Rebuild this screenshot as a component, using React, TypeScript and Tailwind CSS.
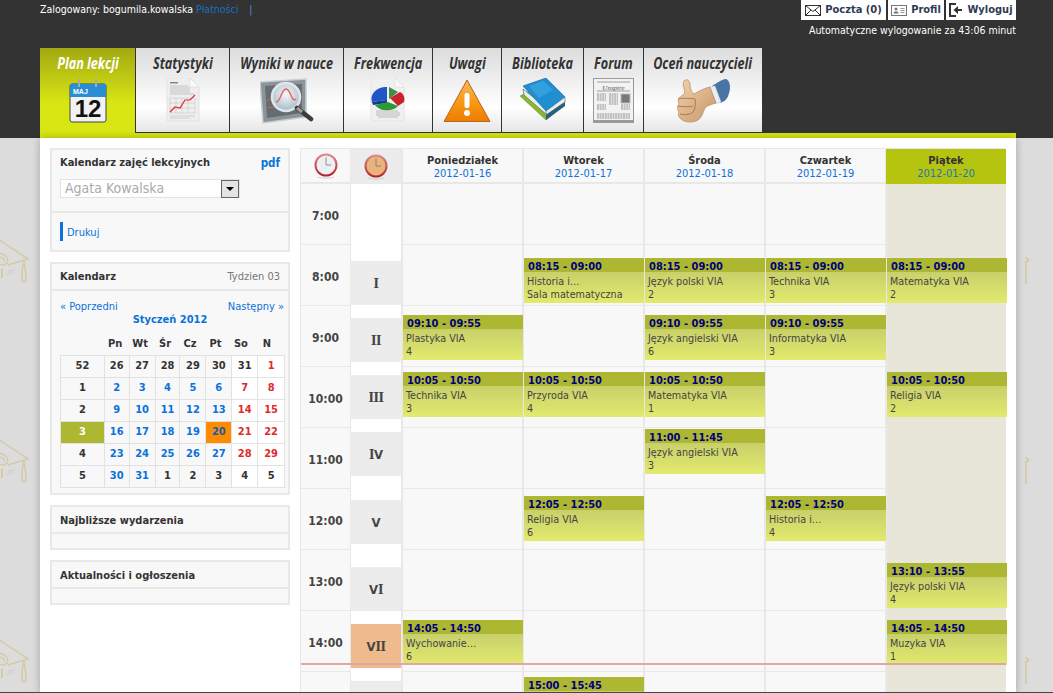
const tabs = [
  { label: 'Statystyki', w: 'w-[94px]', icon: <ReportIcon /> },
  { label: 'Wyniki w nauce', w: 'w-[114px]', icon: <ScopeIcon /> },
  { label: 'Frekwencja', w: 'w-[89px]', icon: <PieIcon /> },
  { label: 'Uwagi', w: 'w-[69px]', icon: <WarningIcon /> },
  { label: 'Biblioteka', w: 'w-[82px]', icon: <BooksIcon /> },
  { label: 'Forum', w: 'w-[60px]', icon: <NewsIcon /> },
  { label: 'Oceń nauczycieli', w: 'w-[119px]', icon: <ThumbIcon /> },
]

// last row is cut off by the window, only its frame shows
const hours = ['7:00', '8:00', '9:00', '10:00', '11:00', '12:00', '13:00', '14:00', '']

const periods = [
  { n: 'I', top: 77 },
  { n: 'II', top: 134 },
  { n: 'III', top: 191 },
  { n: 'IV', top: 248 },
  { n: 'V', top: 316 },
  { n: 'VI', top: 383 },
  { n: 'VII', top: 440, now: true },
  { n: '', top: 497 },
]

const T = { a: 74, b: 131, c: 188, d: 245, e: 312, f: 379, g: 436, h: 493 }

const days = [
  {
    name: 'Poniedziałek',
    date: '2012-01-16',
    lessons: [
      { top: T.b, time: '09:10 - 09:55', title: 'Plastyka VIA', room: '4' },
      { top: T.c, time: '10:05 - 10:50', title: 'Technika VIA', room: '3' },
      { top: T.g, time: '14:05 - 14:50', title: 'Wychowanie…', room: '6' },
    ],
  },
  {
    name: 'Wtorek',
    date: '2012-01-17',
    lessons: [
      { top: T.a, time: '08:15 - 09:00', title: 'Historia i…', room: 'Sala matematyczna' },
      { top: T.c, time: '10:05 - 10:50', title: 'Przyroda VIA', room: '4' },
      { top: T.e, time: '12:05 - 12:50', title: 'Religia VIA', room: '6' },
      { top: T.h, time: '15:00 - 15:45', title: '', room: '' },
    ],
  },
  {
    name: 'Środa',
    date: '2012-01-18',
    lessons: [
      { top: T.a, time: '08:15 - 09:00', title: 'Język polski VIA', room: '2' },
      { top: T.b, time: '09:10 - 09:55', title: 'Język angielski VIA', room: '6' },
      { top: T.c, time: '10:05 - 10:50', title: 'Matematyka VIA', room: '1' },
      { top: T.d, time: '11:00 - 11:45', title: 'Język angielski VIA', room: '3' },
    ],
  },
  {
    name: 'Czwartek',
    date: '2012-01-19',
    lessons: [
      { top: T.a, time: '08:15 - 09:00', title: 'Technika VIA', room: '3' },
      { top: T.b, time: '09:10 - 09:55', title: 'Informatyka VIA', room: '3' },
      { top: T.e, time: '12:05 - 12:50', title: 'Historia i…', room: '4' },
    ],
  },
  {
    name: 'Piątek',
    date: '2012-01-20',
    today: true,
    lessons: [
      { top: T.a, time: '08:15 - 09:00', title: 'Matematyka VIA', room: '2' },
      { top: T.c, time: '10:05 - 10:50', title: 'Religia VIA', room: '2' },
      { top: T.f, time: '13:10 - 13:55', title: 'Język polski VIA', room: '4' },
      { top: T.g, time: '14:05 - 14:50', title: 'Muzyka VIA', room: '1' },
    ],
  },
]

const weeks = [
  ['52', '26', '27', '28', '29', '30', '31', '1'],
  ['1', '2', '3', '4', '5', '6', '7', '8'],
  ['2', '9', '10', '11', '12', '13', '14', '15'],
  ['3', '16', '17', '18', '19', '20', '21', '22'],
  ['4', '23', '24', '25', '26', '27', '28', '29'],
  ['5', '30', '31', '1', '2', '3', '4', '5'],
]

function ReportIcon() {
  return (
    <svg width="36" height="46" viewBox="0 0 36 46">
      <path d="M2 0h23l9 9v34H2z" fill="#eeeeee" stroke="#e2e2e2" />
      <path d="M25 0l9 9h-9z" fill="#fafafa" stroke="#d0d0d0" strokeWidth=".5" />
      <rect x="5" y="4" width="8" height="1.5" fill="#888" />
      <path d="M5 8h18M5 10h20M5 12h20M5 14h20M5 16h24" stroke="#c4c4c4" strokeWidth="1" />
      <path d="M5 20h25M5 25h25M5 30h25M5 35h25M5 20v15M11 20v15M17 20v15M23 20v15M30 20v15" stroke="#c8c8c8" strokeWidth=".6" fill="none" />
      <path d="M5 34l5-5 5 1 5-8 5 0 5-5" stroke="#e5282a" strokeWidth="1.2" fill="none" />
      <path d="M5 38h25M5 40h20" stroke="#cfcfcf" strokeWidth="1" />
    </svg>
  )
}

function ScopeIcon() {
  return (
    <svg width="54" height="46" viewBox="0 0 54 46">
      <defs>
        <radialGradient id="lens" cx=".5" cy=".4" r=".6">
          <stop offset="0" stopColor="#f4f7f9" />
          <stop offset="1" stopColor="#a9bcc7" />
        </radialGradient>
      </defs>
      <path d="M0 4l46-3v38L3 45z" fill="#8d9499" stroke="#c5d0d6" strokeWidth="1.5" />
      <path d="M5 8l37-2v29L7 40z" fill="#666c70" />
      <path d="M6 23l12-5M34 20l8-2M7 30l35-5" stroke="#d86a6a" strokeWidth=".7" />
      <circle cx="26" cy="19" r="14" fill="url(#lens)" stroke="#dfe7ec" strokeWidth="2.5" />
      <path d="M16 24c5 0 5-13 10-13s5 14 10 10" stroke="#e06060" strokeWidth="1.3" fill="none" />
      <path d="M37 30l14 11" stroke="#3c3c3c" strokeWidth="4.5" strokeLinecap="round" />
      <path d="M37 30l5 4" stroke="#a0a0a0" strokeWidth="3" />
    </svg>
  )
}

function PieIcon() {
  return (
    <svg width="36" height="46" viewBox="0 0 36 46">
      <path d="M1 0h24l9 9v34H1z" fill="#f0f0f0" stroke="#e4e4e4" />
      <path d="M25 0l9 9h-9z" fill="#fbfbfb" stroke="#d4d4d4" strokeWidth=".5" />
      <path d="M17 9v13L2 24c-3-8 6-16 15-15z" fill="#1f55c8" />
      <path d="M2 24l15-2v3L3 27z" fill="#123a8e" />
      <path d="M19 9l9 5-9 7z" fill="#3f8f46" />
      <path d="M20 20l10-6c4 2 5 6 4 10l-6 4z" fill="#c9232b" />
      <path d="M5 27l13-3 10 4c-5 6-18 6-23-1z" fill="#2d9a38" />
      <path d="M6 33h22M6 35h24M6 37h24M8 39h20" stroke="#bcbcbc" strokeWidth="1" />
    </svg>
  )
}

function WarningIcon() {
  return (
    <svg width="48" height="44" viewBox="0 0 48 44">
      <defs>
        <linearGradient id="warn" x1="0" y1="0" x2="0" y2="1">
          <stop offset="0" stopColor="#f9b85a" />
          <stop offset=".6" stopColor="#f69510" />
          <stop offset="1" stopColor="#f07c00" />
        </linearGradient>
      </defs>
      <path d="M24 1l23 41.500H1z" fill="url(#warn)" stroke="#b5651d" strokeWidth="1" strokeLinejoin="round" />
      <rect x="21.500" y="14" width="5" height="15" rx="2" fill="#fff" />
      <circle cx="24" cy="34" r="3" fill="#fff" />
    </svg>
  )
}

function BooksIcon() {
  return (
    <svg width="48" height="46" viewBox="0 0 48 46">
      <path d="M1 18l26 24 18-15-26-19z" fill="#8db52c" stroke="#6e8e20" strokeWidth=".5" />
      <path d="M4 11l24 19v7L5 17z" fill="#e8eef0" stroke="#55707c" strokeWidth=".7" />
      <path d="M4 8L27 0l19 19-19 14z" fill="#1f8fd2" stroke="#1a6ea4" strokeWidth=".7" />
      <path d="M10 8l14-5 10 9-14 8z" fill="#3aa6e2" opacity=".7" />
      <path d="M27 33l19-14v5L27 37z" fill="#e8eef0" stroke="#55707c" strokeWidth=".7" />
      <path d="M27 37l19-13v4L27 42z" fill="#285f80" />
    </svg>
  )
}

function NewsIcon() {
  return (
    <svg width="41" height="46" viewBox="0 0 41 46">
      <rect x=".5" y=".5" width="40" height="44" fill="#f2f2f2" stroke="#9a9a9a" />
      <rect x=".5" y="42" width="40" height="3" fill="#9a9a9a" />
      <path d="M4 4h33M4 13h33" stroke="#8a8a8a" strokeWidth=".8" />
      <text x="20.500" y="11.500" textAnchor="middle" fontSize="7" fontStyle="italic" fontFamily="Liberation Serif, serif" fill="#555">Unspire</text>
      <path d="M4 16h9M4 18h9M4 20h9M4 22h9M4 27h9M4 29h9M4 31h9M16 16h9M16 18h9M16 20h9M16 22h9M16 24h9M16 26h9M28 27h9M28 29h9M28 31h9M4 36h33M4 38h33M4 40h33" stroke="#8f8f8f" strokeWidth="1" strokeDasharray="2 .6" />
      <rect x="28" y="16" width="9" height="9" fill="#777" stroke="#bbb" />
    </svg>
  )
}

function ThumbIcon() {
  return (
    <svg width="56" height="46" viewBox="0 0 56 46">
      <defs>
        <linearGradient id="skin" x1="0" y1="0" x2="1" y2="1">
          <stop offset="0" stopColor="#f3d3ac" />
          <stop offset="1" stopColor="#c79468" />
        </linearGradient>
      </defs>
      <path d="M37 8c5-3 10-7 14-7 4 1 5 9 3 14-1 6-5 9-9 10z" fill="#4a74a3" />
      <path d="M34 9l6-1 6 16-5 2z" fill="#e8eef4" stroke="#c4ccd4" strokeWidth=".5" />
      <path d="M9 3c3-3 6 0 6 3 0 4 1 8 4 10 5-3 11-6 16-7l6 16c-3 1-8 2-11 5-2 4-3 11-9 13-6 2-12 1-15-2-3-2-3-5-2-7-2-3-2-6 0-8-2-4 0-7 4-9 2-1 2-4 1-7-1-3-1-5 0-7z" fill="url(#skin)" stroke="#a97a50" strokeWidth=".6" />
      <path d="M3 21c4-1 12-1 17 0M3 28c5 1 12 1 15 0M5 36c4 1 9 1 12-1M20 21c1 4 0 12-3 14" stroke="#9c6c44" strokeWidth=".8" fill="none" />
    </svg>
  )
}

function ClockIcon({ face }: { face: string }) {
  return (
    <svg width="26" height="26" viewBox="0 0 26 26">
      <defs>
        <linearGradient id="ring" x1="0" y1="0" x2="0" y2="1">
          <stop offset="0" stopColor="#d98a8a" />
          <stop offset="1" stopColor="#b5252a" />
        </linearGradient>
      </defs>
      <circle cx="13" cy="12" r="10.500" fill={face} stroke="url(#ring)" strokeWidth="2" />
      <path d="M13 12V4.500M13 12h5" stroke="#777" strokeWidth=".8" />
      <path d="M5 24c3 1.500 13 1.500 16 0" stroke="#ccc" strokeWidth="1" fill="none" />
    </svg>
  )
}

function Mail() {
  return (
    <svg width="16" height="11" viewBox="0 0 16 11" fill="none" stroke="#333">
      <rect x=".5" y=".5" width="15" height="10" />
      <path d="M.5.5L8 6.500 15.500.5M.5 10.500L6 5M15.500 10.500L10 5" />
    </svg>
  )
}

function Card() {
  return (
    <svg width="16" height="11" viewBox="0 0 16 11">
      <rect x=".5" y=".5" width="15" height="10" fill="#fff" stroke="#777" />
      <circle cx="5" cy="4" r="1.500" fill="#777" />
      <path d="M2.500 8.500c0-3 5-3 5 0z" fill="#777" />
      <path d="M9.500 3.500h4M9.500 5.500h4M9.500 7.500h4" stroke="#999" />
    </svg>
  )
}

function Exit() {
  return (
    <svg width="14" height="14" viewBox="0 0 14 14">
      <path d="M7 1H1v12h6" fill="none" stroke="#333" strokeWidth="2" />
      <path d="M13 6H9V3L4.500 7 9 11V8h4z" fill="#333" />
    </svg>
  )
}

function Cap({ top }: { top: number }) {
  return (
    <svg style={{ top }} className="absolute left-0" width="30" height="46" viewBox="0 0 30 46" fill="none" stroke="#d2cba8" strokeWidth="1.500">
      <path d="M-2 1L28 21 8 27" />
      <path d="M-2 15c8 1 11 6 9 10-2 3-6 2-9 1" />
      <path d="M-2 19c5 0 7 3 6 5" />
      <path d="M24 24c-2 5-3 14-1 20 3 0 3-1 3-2 0-6-1-12-2-18z" />
      <path d="M2 31v9" strokeWidth="2" />
      <text x="5" y="36" fontSize="8" fontStyle="italic" fontFamily="Liberation Sans, sans-serif" fill="#cacaca" stroke="none">.pl</text>
    </svg>
  )
}

function Tassel({ top }: { top: number }) {
  return (
    <svg style={{ top }} className="absolute left-[1024px]" width="6" height="28" viewBox="0 0 6 28" fill="none" stroke="#d2cba8" strokeWidth="1.800">
      <path d="M1 0l4 3-3 2v22" />
    </svg>
  )
}

function Panel({ children, className = '' }: { children: React.ReactNode; className?: string }) {
  return <div className={`border-2 border-[#e8e8e8] bg-[#f8f8f8] ${className}`}>{children}</div>
}

function Numeral({ n }: { n: string }) {
  return (
    <span className="text-[13px] font-bold text-[#444]">
      {n.split('').map((c, i) =>
        c === 'I' ? (
          <span key={i} className="font-['DejaVu_Serif',serif] tracking-[-0.5px]">I</span>
        ) : (
          <span key={i} className="font-['DejaVu_Sans',sans-serif]">{c}</span>
        ),
      )}
    </span>
  )
}

function CalendarTable() {
  const head = ['', 'Pn', 'Wt', 'Śr', 'Cz', 'Pt', 'So', 'N']
  const widths = ['w-[44px]', 'w-[25px]', 'w-[26px]', 'w-[25px]', 'w-[26px]', 'w-[26px]', 'w-[26px]', 'w-[27px]']
  return (
    <div className="text-[11px] font-bold">
      <div className="flex h-[22px] items-center text-[#333]">
        {head.map((h, i) => (
          <div key={i} className={`${widths[i]} text-center`}>{h}</div>
        ))}
      </div>
      <div className="w-[225px] border-t border-l border-[#e2e2e2]">
        {weeks.map((row, r) => (
          <div key={r} className="flex h-[22px]">
            {row.map((v, c) => {
              let cell = 'text-[#0b72d9] bg-[#f8f8f8]'
              if (c === 0) cell = r === 3 ? 'bg-[#aeb731] text-white' : 'text-[#333] bg-[#f8f8f8]'
              else if ((r === 0 && c < 7) || (r === 5 && c > 2)) cell = c >= 6 ? 'text-[#333] bg-white' : 'text-[#333] bg-[#f8f8f8]'
              else if (c >= 6) cell = 'text-[#e02b2b] bg-white'
              if (r === 0 && c === 7) cell = 'text-[#e02b2b] bg-white'
              if (r === 3 && c === 5) cell = 'bg-[#ff8c00] text-[#0b5fb0]'
              return (
                <div
                  key={c}
                  className={`${widths[c]} flex items-center justify-center border-r border-b border-[#e2e2e2] ${cell}`}
                >
                  {v}
                </div>
              )
            })}
          </div>
        ))}
      </div>
    </div>
  )
}

function Sidebar() {
  const title = 'text-[11px] font-bold text-[#333]'
  return (
    <div className="flex w-[240px] flex-col gap-[10px]">
      <Panel className="h-[104px]">
        <div className="h-[61px] px-[8px] pt-[5px]">
          <div className="flex items-center justify-between">
            <span className={title}>Kalendarz zajęć lekcyjnych</span>
            <span className="text-[11.500px] font-bold text-[#0b72d9]">pdf</span>
          </div>
          <div className="mt-[7px] flex h-[19px] w-[180px] items-center justify-between border border-[#e2e2e2] bg-white pl-[4px]">
            <span className="text-[14px] text-[#aaa]">Agata Kowalska</span>
            <span className="flex h-[18px] w-[18px] items-center justify-center border border-[#666] bg-[#e4e4e4]">
              <span className="border-x-[4px] border-t-[4px] border-x-transparent border-t-black" />
            </span>
          </div>
        </div>
        <div className="flex items-center gap-[4px] border-t-2 border-[#e8e8e8] px-[8px] pt-[9px]">
          <span className="h-[19px] w-[3px] bg-[#0b72d9]" />
          <span className="pt-[3px] text-[11px] text-[#0b72d9]">Drukuj</span>
        </div>
      </Panel>
      <Panel className="h-[233px]">
        <div className="flex h-[27px] items-center justify-between border-b-2 border-[#e8e8e8] px-[8px] pt-[2px]">
          <span className={title}>Kalendarz</span>
          <span className="text-[11px] text-[#777]">Tydzien 03</span>
        </div>
        <div className="px-[8px]">
          <div className="flex h-[24px] items-end justify-between text-[11px] text-[#0b72d9]">
            <span>« Poprzedni</span>
            <span className="-mr-[4px]">Następny »</span>
          </div>
          <div className="-mt-[1px] h-[19px] text-center text-[11px] font-bold leading-[12px] text-[#0b72d9]">
            Styczeń 2012
          </div>
          <CalendarTable />
        </div>
      </Panel>
      {['Najbliższe wydarzenia', 'Aktualności i ogłoszenia'].map((t) => (
        <Panel key={t} className="h-[45px]">
          <div className={`flex h-[27px] items-center border-b-2 border-[#e8e8e8] px-[8px] pt-[3px] ${title}`}>{t}</div>
        </Panel>
      ))}
    </div>
  )
}

function Timetable() {
  return (
    <div className="relative flex w-[706px] border-t border-l border-[#e8e8e8]">
      <div className="w-[50px] border-r border-[#e8e8e8]">
        <div className="flex h-[35px] items-center justify-center border-b-2 border-[#e8e8e8] bg-[#f8f8f8]">
          <ClockIcon face="#edf0f2" />
        </div>
        {hours.map((h, i) => (
          <div
            key={i}
            className="flex h-[61px] items-center justify-center border-b border-[#e8e8e8] bg-[#f8f8f8] pt-[4px] font-['DejaVu_Sans',sans-serif] text-[12px] font-bold text-[#444]"
          >
            {h}
          </div>
        ))}
      </div>
      <div className="w-[50px]">
        <div className="flex h-[35px] items-center justify-center bg-[#ececec]">
          <ClockIcon face="#eab27c" />
        </div>
        <div className="relative h-[549px] bg-white">
          {periods.map((p) => (
            <div
              key={p.top}
              style={{ top: p.top }}
              className={`absolute left-0 flex h-[44px] w-full items-center justify-center pt-[2px] ${p.now ? 'bg-[#efbb8c]' : 'bg-[#ececec]'}`}
            >
              <Numeral n={p.n} />
            </div>
          ))}
        </div>
      </div>
      {days.map((d) => (
        <div key={d.name} className="w-[121px] border-l-2 border-[#e8e8e8]">
          <div
            className={`flex h-[35px] flex-col items-center justify-center pt-[2px] leading-[13px] ${d.today ? '-ml-px w-[120px] bg-[#b5c40f] pb-[2px]' : 'border-b-2 border-[#e8e8e8] bg-[#f8f8f8]'}`}
          >
            <span className="text-[11px] font-bold text-[#333]">{d.name}</span>
            <span className={`text-[11px] ${d.today ? 'text-[#1a78b8]' : 'text-[#0b72d9]'}`}>{d.date}</span>
          </div>
          <div className="relative">
            {hours.map((h, i) => (
              <div key={i} className={d.today ? 'h-[61px] bg-[#e8e6d8]' : 'h-[61px] border-b border-[#e8e8e8] bg-[#f8f8f8]'} />
            ))}
            {d.lessons.map((l) => (
              <div key={l.time} style={{ top: l.top }} className="absolute left-0 z-10 h-[45px] w-[120px]">
                <div className="h-[14px] bg-[#aeb731] pl-[4px] pt-[2px] text-[11px] font-bold leading-[14px] text-[#00007a]">
                  {l.time}
                </div>
                <div className="h-[31px] bg-gradient-to-b from-[#c8d06a] to-[#e2ea6e] pl-[3px] pt-[3px] text-[10.700px] leading-[13px] text-[#444]">
                  <div>{l.title}</div>
                  <div>{l.room}</div>
                </div>
              </div>
            ))}
          </div>
        </div>
      ))}
      <div className="absolute left-0 top-[514px] z-20 h-[2px] w-full bg-[#e3a6a6]" />
    </div>
  )
}

export default function App() {
  return (
    <div className="relative h-[693px] w-[1053px] overflow-hidden bg-[#dcdcdc] font-['DejaVu_Sans_Condensed','DejaVu_Sans',sans-serif] font-stretch-condensed">
      {[238, 438, 638].map((y) => (
        <Cap key={y} top={y} />
      ))}
      {[257, 457, 657].map((y) => (
        <Tassel key={y} top={y} />
      ))}
      <div className="relative h-[138px] bg-[#333] px-[40px]">
        <div className="flex h-[48px] w-[976px] justify-between">
          <div className="pt-[2px] text-[10.500px] text-white">
            Zalogowany: bogumila.kowalska <span className="text-[#1a6fc0]">Płatności</span>
            <span className="ml-[11px] text-[#4a90d9]">|</span>
          </div>
          <div className="flex flex-col items-end">
            <div className="flex h-[20px] gap-[2px] text-[11px] font-bold text-[#2f3a55]">
              <div className="flex w-[85px] items-center justify-center gap-[4px] bg-white"><Mail />Poczta (0)</div>
              <div className="flex w-[56px] items-center justify-center gap-[4px] bg-white"><Card />Profil</div>
              <div className="flex w-[70px] items-center justify-center gap-[4px] bg-white"><Exit />Wyloguj</div>
            </div>
            <div className="pt-[2px] text-[10.500px] leading-[16px] text-white">Automatyczne wylogowanie za 43:06 minut</div>
          </div>
        </div>
        <div className="flex h-[85px]">
          <div className="flex w-[95px] flex-col items-center bg-gradient-to-b from-[#a2a911] to-[#d8e614] to-65% pt-[3px]">
            <div className="scale-x-[.79] whitespace-nowrap font-['Open_Sans',sans-serif] text-[16px] font-bold italic leading-[24px] text-white [font-stretch:normal]">
              Plan lekcji
            </div>
            <svg className="mt-[3px]" width="40" height="46" viewBox="0 0 40 46">
              <rect x="2" y="6" width="36" height="38" rx="2" fill="#f2f2f2" stroke="#444" />
              <rect x="2" y="6" width="36" height="13" fill="#2a8ed6" />
              <path d="M11 1v8M28 1v8" stroke="#aaa" strokeWidth="2" />
              <text x="5" y="16" fontSize="7" fontWeight="bold" fontFamily="Liberation Sans, sans-serif" fill="#fff">MAJ</text>
              <text x="20" y="39" textAnchor="middle" fontSize="24" fontWeight="bold" fontFamily="Liberation Sans, sans-serif" fill="#111">12</text>
            </svg>
          </div>
          {tabs.map((t) => (
            <div
              key={t.label}
              className={`flex flex-col items-center border-b border-l border-[#333] bg-gradient-to-b from-[#dcdcdc] via-white via-70% to-[#e6e6e6] pt-[3px] ${t.w}`}
            >
              <div className="scale-x-[.79] whitespace-nowrap font-['Open_Sans',sans-serif] text-[16px] font-bold italic leading-[24px] text-[#333] [font-stretch:normal]">
                {t.label}
              </div>
              <div className="mt-[3px] flex h-[46px] items-center">{t.icon}</div>
            </div>
          ))}
        </div>
        <div className="absolute bottom-0 left-[40px] h-[5px] w-[976px] bg-[#d8e614]" />
      </div>
      <div className="relative h-[555px] w-[976px] translate-x-[40px] bg-white shadow-[0_0_8px_rgba(0,0,0,0.25)]">
        <div className="flex gap-[10px] pl-[10px] pt-[10px]">
          <Sidebar />
          <Timetable />
        </div>
      </div>
      <div className="absolute bottom-0 left-0 h-[1px] w-full bg-[#3a4a50]" />
    </div>
  )
}
